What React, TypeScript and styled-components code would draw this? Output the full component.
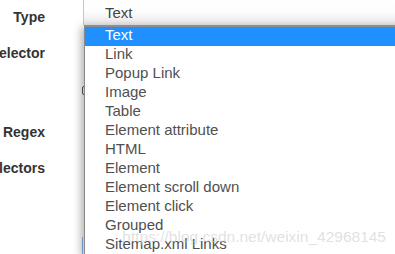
import * as React from "react";
import styled, { createGlobalStyle } from "styled-components";

const Global = createGlobalStyle`
    html, body {
        margin: 0;
        padding: 0;
        background: #fff;
        overflow: hidden;
    }
`

const Page = styled.div`
    position: relative;
    display: flex;
    width: 395px;
    height: 254px;
    overflow: hidden;
    font-family: "Liberation Sans", Arial, sans-serif;
`

const LabelCol = styled.div`
    width: 45px;
    flex: 0 0 45px;
    display: flex;
    flex-direction: column;
    align-items: flex-end;
`

const Label = styled.label<{ $gap: number }>`
    margin-top: ${p => p.$gap}px;
    font-size: 14px;
    font-weight: bold;
    line-height: 16px;
    color: #333;
    white-space: nowrap;
`

const FieldCol = styled.div`
    position: relative;
    flex: 1;
    margin-left: 37px;
    display: flex;
    flex-direction: column;
`

const SelectBox = styled.div`
    margin-left: 1px;
    height: 25px;
    box-sizing: border-box;
    padding-left: 21px;
    border-left: 1px solid #a9cbf5;
    background: linear-gradient(#fff 0%, #fdfdfd 45%, #e8e8e8 100%);
    font-size: 15px;
    line-height: 25px;
    color: #444;
`

const Checkbox = styled.div`
    margin-top: 61px;
    width: 12px;
    height: 12px;
    box-sizing: border-box;
    border: 1px solid #555;
    border-radius: 2px;
`

const TextInput = styled.div`
    margin-top: 142px;
    height: 24px;
    border-left: 1px solid #8fb8ec;
`

const DropList = styled.ul`
    position: absolute;
    top: 25px;
    left: 2px;
    right: -20px;
    margin: 0;
    padding: 0;
    list-style: none;
    background: #fff;
    border-top: 2px solid #8e8e8e;
    border-left: 1px solid #8a8a8a;
    box-shadow: -3px 2px 8px rgba(0, 0, 0, 0.3);
`

const Option = styled.li<{ $active?: boolean }>`
    height: 19px;
    box-sizing: border-box;
    padding: 0 0 3px 20px;
    font-size: 15px;
    line-height: 16px;
    white-space: nowrap;
    color: ${p => (p.$active ? "#fff" : "#505050")};
    background: ${p => (p.$active ? "#1e90ff" : "transparent")};
`

const Watermark = styled.div`
    position: absolute;
    right: 9px;
    top: 228px;
    font-family: "Liberation Sans", Arial, sans-serif;
    font-size: 15.5px;
    color: rgba(200, 200, 200, 0.55);
    white-space: nowrap;
    pointer-events: none;
`

const options = [
    "Text",
    "Link",
    "Popup Link",
    "Image",
    "Table",
    "Element attribute",
    "HTML",
    "Element",
    "Element scroll down",
    "Element click",
    "Grouped",
    "Sitemap.xml Links",
]

export default function App() {
    return (
        <Page>
            <Global />
            <LabelCol>
                <Label $gap={9}>Type</Label>
                <Label $gap={20}>Selector</Label>
                <Label $gap={63}>Regex</Label>
                <Label $gap={20}>Parent Selectors</Label>
            </LabelCol>
            <FieldCol>
                <SelectBox>Text</SelectBox>
                <Checkbox />
                <TextInput />
                <DropList>
                    {options.map((o, i) => (
                        <Option key={o} $active={i === 0}>{o}</Option>
                    ))}
                </DropList>
            </FieldCol>
            <Watermark>https://blog.csdn.net/weixin_42968145</Watermark>
        </Page>
    );
}
